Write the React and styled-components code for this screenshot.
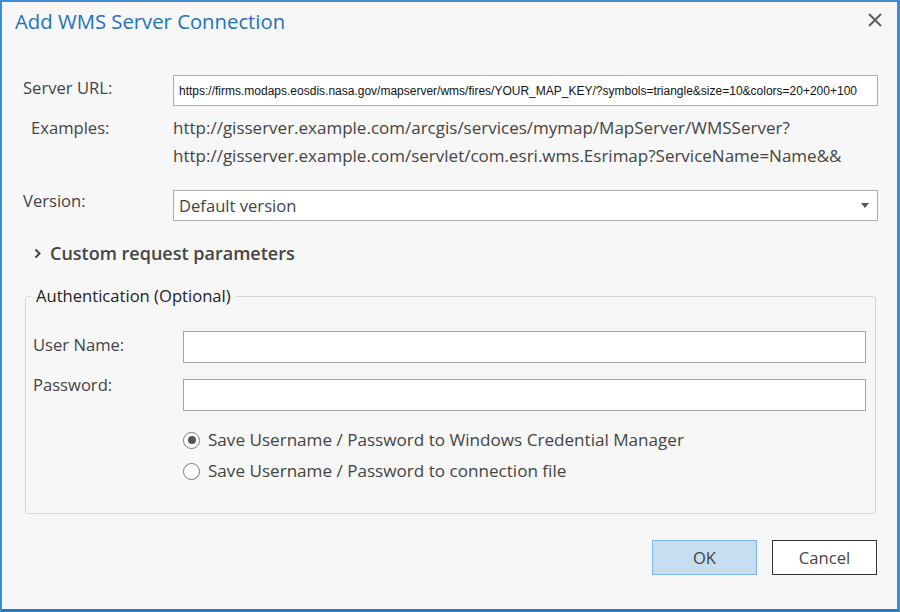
import React from 'react';
import styled, { createGlobalStyle } from 'styled-components';

const GlobalStyle = createGlobalStyle`
	html, body {
		margin: 0;
		padding: 0;
		background: #f7f7f7;
	}
	* {
		box-sizing: border-box;
	}
`;

const App = () => {
	return (
		<>
			<GlobalStyle />
			<Dialog>
				<Header>
					<Title>Add WMS Server Connection</Title>
					<CloseButton aria-label="Close">
						<svg width="14" height="14" viewBox="0 0 14 14">
							<path d="M1 1L13 13M13 1L1 13" stroke="#5a5a5a" strokeWidth="1.8" />
						</svg>
					</CloseButton>
				</Header>

				<Body>
					<FormGrid>
						<Label>Server URL:</Label>
						<UrlInput
							readOnly
							value="https://firms.modaps.eosdis.nasa.gov/mapserver/wms/fires/YOUR_MAP_KEY/?symbols=triangle&size=10&colors=20+200+100"
						/>

						<Label $indent>Examples:</Label>
						<Examples>
							<div>http://gisserver.example.com/arcgis/services/mymap/MapServer/WMSServer?</div>
							<div>http://gisserver.example.com/servlet/com.esri.wms.Esrimap?ServiceName=Name&amp;&amp;</div>
						</Examples>

						<Label $raise={6}>Version:</Label>
						<Select>
							<span>Default version</span>
							<svg width="8" height="5" viewBox="0 0 8 5">
								<path d="M0 0H8L4 5Z" fill="#555" />
							</svg>
						</Select>
					</FormGrid>

					<Expander>
						<svg width="8" height="11" viewBox="0 0 8 11">
							<path d="M1.5 1.5L5.5 5.5L1.5 9.5" stroke="#444" strokeWidth="2" fill="none" />
						</svg>
						<span>Custom request parameters</span>
					</Expander>

					<Fieldset>
						<Legend>Authentication (Optional)</Legend>
						<AuthGrid>
							<Label $raise={-1}>User Name:</Label>
							<TextBox />
							<Label $raise={7}>Password:</Label>
							<TextBox type="password" />
						</AuthGrid>
						<Radios>
							<RadioRow>
								<Radio $checked />
								<span>Save Username / Password to Windows Credential Manager</span>
							</RadioRow>
							<RadioRow>
								<Radio />
								<span>Save Username / Password to connection file</span>
							</RadioRow>
						</Radios>
					</Fieldset>
				</Body>

				<Footer>
					<Button $primary>OK</Button>
					<Button>Cancel</Button>
				</Footer>
			</Dialog>
		</>
	);
};

const Dialog = styled.div`
	width: 900px;
	height: 612px;
	background: #f7f7f7;
	border: 2px solid #3a8fd4;
	border-right-width: 3px;
	border-bottom: 3px solid #2d7cb5;
	font-family: 'Open Sans', 'Noto Sans', sans-serif;
	color: #444;
	display: flex;
	flex-direction: column;
`;

const Header = styled.div`
	height: 44px;
	padding: 5px 12px 0 13px;
	display: flex;
	justify-content: space-between;
	align-items: flex-start;
`;

const Title = styled.h1`
	margin: 0;
	font-size: 20.3px;
	font-weight: 400;
	color: #1f73b4;
	line-height: 28px;
`;

const CloseButton = styled.div`
	width: 20px;
	height: 20px;
	margin-top: 3px;
	display: flex;
	align-items: center;
	justify-content: center;
`;

const Body = styled.div`
	flex: 1;
	padding: 29px 19px 0 21px;
`;

const FormGrid = styled.div`
	display: grid;
	grid-template-columns: 150px 1fr;
	align-items: start;
`;

const Label = styled.div`
	font-size: 16.6px;
	line-height: 26px;
	color: #444;
	padding-left: ${(p) => (p.$indent ? '8px' : '0')};
	margin-top: ${(p) => (p.$raise ? `${-p.$raise}px` : '0')};
`;

const UrlInput = styled.input`
	height: 31px;
	width: 100%;
	border: 1px solid #adadad;
	background: #fff;
	font-family: 'Liberation Sans', Arial, sans-serif;
	font-size: 12px;
	color: #111;
	padding: 0 5px;
	margin-bottom: 9px;
	outline: none;
`;

const Examples = styled.div`
	font-size: 17px;
	line-height: 28px;
	color: #444;
	margin-bottom: 24px;
	margin-top: -1px;
`;

const Select = styled.div`
	height: 31px;
	border: 1px solid #adadad;
	background: #fff;
	display: flex;
	align-items: center;
	justify-content: space-between;
	padding: 0 8px 0 5px;
	font-size: 16.6px;
	color: #444;
	margin-top: -4px;
`;

const Expander = styled.div`
	display: flex;
	align-items: center;
	gap: 8px;
	margin-top: 20px;
	padding-left: 11px;
	font-size: 18px;
	font-weight: 600;
	color: #454545;
`;

const Fieldset = styled.fieldset`
	margin: 20px 2px 0 2px;
	padding: 8px 9px 31px 7px;
	border: 1px solid #d6d6d6;
	border-radius: 3px;
`;

const Legend = styled.legend`
	font-size: 16.6px;
	line-height: 22px;
	color: #222;
	padding: 0 5px;
	margin-left: -2px;
`;

const AuthGrid = styled.div`
	display: grid;
	grid-template-columns: 150px 1fr;
	row-gap: 16px;
	align-items: start;
	margin-top: 16px;
`;

const TextBox = styled.input`
	height: 32px;
	width: 100%;
	border: 1px solid #a3a3a3;
	background: #fff;
	outline: none;
`;

const Radios = styled.div`
	display: flex;
	flex-direction: column;
	gap: 9px;
	padding-left: 150px;
	margin-top: 18px;
`;

const RadioRow = styled.div`
	display: flex;
	align-items: center;
	gap: 8px;
	font-size: 17.1px;
	line-height: 22px;
	color: #444;
`;

const Radio = styled.span`
	width: 17px;
	height: 17px;
	border-radius: 50%;
	border: 1px solid #777;
	background: #fff;
	position: relative;
	&::after {
		content: '';
		display: ${(p) => (p.$checked ? 'block' : 'none')};
		position: absolute;
		left: 3.5px;
		top: 3.5px;
		width: 8px;
		height: 8px;
		border-radius: 50%;
		background: #555;
	}
`;

const Footer = styled.div`
	display: flex;
	justify-content: flex-end;
	gap: 15px;
	padding: 0 20px 34px 0;
`;

const Button = styled.div`
	width: 105px;
	height: 35px;
	display: flex;
	align-items: center;
	justify-content: center;
	font-size: 16.6px;
	color: #444;
	background: ${(p) => (p.$primary ? '#c7ddf1' : '#fff')};
	border: 1px solid ${(p) => (p.$primary ? '#7fb5e8' : '#333')};
`;

export default App;
